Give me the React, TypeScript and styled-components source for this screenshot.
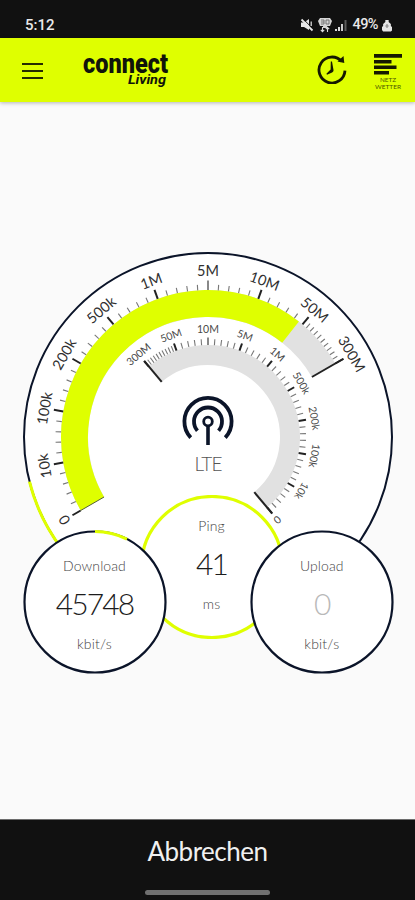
import React from "react";
import styled, { createGlobalStyle } from "styled-components";

const LIME = "#dfff00";
const NAVY = "#0b1429";
const BAND = "#e1e1e1";

const GlobalStyle = createGlobalStyle`
  body { margin: 0; background: #fafafa; }
  * { box-sizing: border-box; }
`;

const Screen = styled.div`
  display: flex;
  flex-direction: column;
  width: 100%;
  height: 900px;
  overflow: hidden;
  background: #fafafa;
  font-family: Lato, "Open Sans", sans-serif;
`;

const StatusBar = styled.div`
  display: flex;
  flex: 0 0 38px;
  align-items: center;
  justify-content: space-between;
  padding: 12px 23px 0 25px;
  background: #111;
  color: #e9e9e9;
  font: 500 15px/20px Roboto, sans-serif;
`;

const StatusIcons = styled.div`
  display: flex;
  align-items: center;
  gap: 3.5px;
`;

const Battery = styled.span`
  width: 27px;
  margin: 0 -1px 0 2px;
  font-size: 14.5px;
  letter-spacing: -0.6px;
`;

const AppBar = styled.header`
  display: flex;
  flex: 0 0 64px;
  align-items: flex-start;
  background: ${LIME};
  box-shadow: 0 1px 4px rgba(0, 0, 0, 0.28);
`;

const MenuButton = styled.button`
  display: flex;
  flex-direction: column;
  gap: 5px;
  width: 21px;
  margin: 25px 0 0 22px;
  padding: 0;
  border: 0;
  background: none;
`;

const MenuLine = styled.span`
  height: 2px;
  background: #252b00;
`;

const Logo = styled.svg`
  display: block;
  margin: 4px 0 0 38px;
  overflow: visible;
`;

const Actions = styled.div`
  display: flex;
  gap: 26px;
  margin: 14px 13px 0 auto;
`;

const Main = styled.main`
  flex: 1;
  padding-top: 148px;
`;

const Meter = styled.div`
  position: relative;
  width: 415px;
  height: 430px;
`;

const Dial = styled.svg`
  display: block;
`;

const Stat = styled.div<{ $x: number; $y: number }>`
  position: absolute;
  left: ${(p) => p.$x - 72}px;
  top: ${(p) => p.$y - 72}px;
  width: 144px;
  height: 144px;
`;

const Ring = styled.svg`
  display: block;
`;

const StatText = styled.div<{ $lift: number }>`
  position: absolute;
  inset: ${(p) => -p.$lift}px 0 0;
  display: flex;
  flex-direction: column;
  align-items: center;
`;

const StatName = styled.div`
  margin-top: 26px;
  color: #444;
  font-size: 14px;
  line-height: 20px;
  font-weight: 300;
  letter-spacing: 0.1px;
`;

const StatValue = styled.div<{ $faded?: boolean }>`
  margin-top: 9px;
  color: ${(p) => (p.$faded ? "#b9b9b9" : "#1c1c1c")};
  font-size: 30px;
  line-height: 36px;
  font-weight: 300;
  letter-spacing: -1.9px;
`;

const StatUnit = styled.div`
  margin-top: 13px;
  color: #444;
  font-size: 14px;
  line-height: 20px;
  font-weight: 300;
  letter-spacing: 0.2px;
`;

const Footer = styled.footer`
  display: flex;
  flex: 0 0 81px;
  flex-direction: column;
  align-items: center;
  border-top: 1px solid #6c6c6c;
  background: #111;
`;

const CancelButton = styled.button`
  margin-top: 13px;
  padding: 0;
  border: 0;
  background: none;
  color: #f0f0f0;
  font: 400 26px/36px Lato, sans-serif;
  letter-spacing: -0.5px;
`;

const HomeHandle = styled.span`
  width: 125px;
  height: 5px;
  margin-top: 21px;
  border-radius: 3px;
  background: #707070;
`;

const CX = 208;
const CY = 187;

const point = (r: number, deg: number, cx = CX, cy = CY) => {
  const a = (deg * Math.PI) / 180;
  return [cx + r * Math.cos(a), cy + r * Math.sin(a)];
};

const arc = (r: number, from: number, to: number, cx = CX, cy = CY) => {
  const [x1, y1] = point(r, from, cx, cy);
  const [x2, y2] = point(r, to, cx, cy);
  return `M${x1} ${y1}A${r} ${r} 0 ${to - from > 180 ? 1 : 0} 1 ${x2} ${y2}`;
};

type TickProps = { angle: number; from: number; to: number; width: number; color: string };

const Tick = ({ angle, from, to, width, color }: TickProps) => {
  const [x1, y1] = point(from, angle);
  const [x2, y2] = point(to, angle);
  return <line x1={x1} y1={y1} x2={x2} y2={y2} stroke={color} strokeWidth={width} />;
};

const LABELS = ["0", "10k", "100k", "200k", "500k", "1M", "5M", "10M", "50M", "300M"];

type ScaleProps = {
  start: number;
  direction: 1 | -1;
  radius: number;
  major: number;
  minor: number;
  labelRadius: number;
  fontSize: number;
  labelColor: string;
  spacing: number;
};

const Scale = (p: ScaleProps) => (
  <g>
    {LABELS.map((label, i) => {
      const angle = p.start + p.direction * 20 * i;
      const step = i === 8 ? 2 : 4;
      const count = i === 9 ? 0 : 20 / step - 1;
      const [x, y] = point(p.labelRadius, angle);
      return (
        <g key={label}>
          <Tick angle={angle} from={p.radius} to={p.radius + p.major} width={2} color={Math.abs(angle) % 90 === 0 ? "#888" : "#222"} />
          {Array.from({ length: count }, (_, n) => (
            <Tick key={n} angle={angle + p.direction * step * (n + 1)} from={p.radius} to={p.radius + p.minor} width={1.1} color="#777" />
          ))}
          <text
            transform={`translate(${x} ${y}) rotate(${angle + 90})`}
            y={p.fontSize * 0.36}
            textAnchor="middle"
            fontSize={p.fontSize}
            fontWeight={400}
            letterSpacing={p.spacing}
            fill={p.labelColor}
          >
            {label}
          </text>
        </g>
      );
    })}
  </g>
);

const SpeedDial = () => (
  <Dial width="415" height="430" viewBox="0 0 415 430" fontFamily="Lato, sans-serif">
    <circle cx={CX} cy={CY} r="184" fill="#fff" stroke={NAVY} strokeWidth="2" />
    <path d={arc(184, 120, 166)} fill="none" stroke={LIME} strokeWidth="3" />

    <path d={arc(133.5, 150, 330)} fill="none" stroke={BAND} strokeWidth="27" />
    <path d={arc(133.5, 150, 308.2)} fill="none" stroke={LIME} strokeWidth="27" />
    <Scale start={150} direction={1} radius={147} major={9.5} minor={5.5} labelRadius={166} fontSize={14.5} labelColor="#303030" spacing={0.1} />
    <Tick angle={150} from={120} to={147} width={1} color="#55603a" />
    <Tick angle={330} from={120} to={156} width={2} color="#222" />

    <path d={arc(82, -130, 50)} fill="none" stroke={BAND} strokeWidth="20" />
    <Scale start={50} direction={-1} radius={92} major={7.5} minor={6} labelRadius={108} fontSize={10.5} labelColor="#4a4a4a" spacing={0} />
    <Tick angle={50} from={72} to={100} width={2} color="#222" />
    <Tick angle={230} from={72} to={99} width={2} color="#222" />

    <g fill="none" stroke={NAVY}>
      <circle cx="208" cy="171.5" r="4.3" strokeWidth="2.8" />
      <path d="M208 176V195" strokeWidth="3.6" />
      <path d={arc(14, 139, 401, 208, 171.5)} strokeWidth="3.8" />
      <path d={arc(23.6, 137, 403, 208, 171.5)} strokeWidth="3.8" />
    </g>
    <text x="208" y="221" textAnchor="middle" fontSize="19" fontWeight="300" letterSpacing="-0.9" fill="#555">LTE</text>
  </Dial>
);

type StatCircleProps = {
  x: number;
  y: number;
  name: string;
  value: string;
  unit: string;
  color: string;
  width: number;
  progress?: number;
  faded?: boolean;
  lift?: number;
};

const StatCircle = (p: StatCircleProps) => (
  <Stat $x={p.x} $y={p.y}>
    <Ring width="144" height="144" viewBox="0 0 144 144">
      <circle cx="72" cy="72" r="70.5" fill="#fff" stroke={p.color} strokeWidth={p.width} />
      {p.progress && <path d={arc(70.5, -90, -90 + p.progress, 72, 72)} fill="none" stroke={LIME} strokeWidth="3" />}
    </Ring>
    <StatText $lift={p.lift ?? 0}>
      <StatName>{p.name}</StatName>
      <StatValue $faded={p.faded}>{p.value}</StatValue>
      <StatUnit>{p.unit}</StatUnit>
    </StatText>
  </Stat>
);

const MuteIcon = () => (
  <svg width="14" height="14" viewBox="0 0 14 14">
    <path d="M1 4.5h3L9 1v11L4 9H1z" fill="#e8e8e8" />
    <path d="M2.6 .4 13 10.8" stroke="#111" strokeWidth="1" />
    <path d="M1.5 1.5 12.5 12.5" stroke="#e8e8e8" strokeWidth="1.8" />
    <path d="M11.2 3.5v4.5" stroke="#e8e8e8" strokeWidth="1.2" />
  </svg>
);

const NetworkIcon = () => (
  <svg width="14" height="16" viewBox="0 0 14 16">
    <path d="M2 1h10l2 3-2 5H9v2H5V9H2L0 4z" fill="#d5d5d5" />
    <path d="M3 3h3v4H3M8 3h3v4H8zM3 5h3" fill="none" stroke="#777" strokeWidth="1" />
    <path d="M4.5 10v4.5M2.8 12.8l1.7 1.8 1.7-1.8M9.5 15v-4.5M7.8 12.2l1.7-1.8 1.7 1.8" fill="none" stroke="#ddd" strokeWidth="1.1" />
  </svg>
);

const SignalIcon = () => (
  <svg width="12" height="13" viewBox="0 0 12 13">
    <path d="M1 10v2M4 8v4" stroke="#ddd" strokeWidth="2" />
    <path d="M7 5v7" stroke="#ccc" strokeWidth="2" />
    <path d="M10.5 1v11" stroke="#5a5a5a" strokeWidth="2" />
  </svg>
);

const ChargeIcon = () => (
  <svg width="10" height="13" viewBox="0 0 9 13" preserveAspectRatio="none">
    <path d="M3 1h3v2l2 2v2l1 1v3.5L8 12.5H1L0 11V8l1-1V5l2-2z" fill="#e5e5e5" />
    <path d="M4.5 5v4M3 7h3" stroke="#888" />
  </svg>
);

const HistoryIcon = () => (
  <svg width="32" height="32" viewBox="0 0 32 32">
    <path d={arc(13, 3, 318, 16, 18)} fill="none" stroke="#151900" strokeWidth="2.8" />
    <path d="m21.5 9.5 6-5.5 .8 7z" fill="#151900" />
    <path d="m14.8 9.5 1.2-.1 1.5 8.6c.2 1.3-.5 2-1.4 2.4L11 22.7l-.6-.9 4.2-4.2z" fill="#151900" />
  </svg>
);

const WeatherIcon = () => (
  <svg width="28" height="40" viewBox="0 0 28 40" fontFamily="Lato, sans-serif" fill="#4e5900">
    <path d="M0 2h28v3.7H0zM0 8h17.5v3.5H0zM0 13.5h22.5v3.5H0zM0 19h15v3.4H0z" fill="#151900" />
    <text x="14" y="30" textAnchor="middle" fontSize="6.5" textLength="16" lengthAdjust="spacingAndGlyphs">NETZ</text>
    <text x="14" y="37" textAnchor="middle" fontSize="6.5" textLength="26" lengthAdjust="spacingAndGlyphs">WETTER</text>
  </svg>
);

export default function App() {
  return (
    <Screen>
      <GlobalStyle />
      <StatusBar>
        <span>5:12</span>
        <StatusIcons>
          <MuteIcon />
          <NetworkIcon />
          <SignalIcon />
          <Battery>49%</Battery>
          <ChargeIcon />
        </StatusIcons>
      </StatusBar>
      <AppBar>
        <MenuButton aria-label="Menu">
          <MenuLine />
          <MenuLine />
          <MenuLine />
        </MenuButton>
        <Logo width="88" height="50" viewBox="0 0 88 50" fontFamily="Roboto, sans-serif" fill="#10140a">
          <text x="2" y="31" fontSize="28" fontWeight="900" textLength="85" lengthAdjust="spacingAndGlyphs">connect</text>
          <text x="47" y="41.6" fontSize="12" fontWeight="700" fontStyle="italic" textLength="38" lengthAdjust="spacingAndGlyphs">Living</text>
        </Logo>
        <Actions>
          <HistoryIcon />
          <WeatherIcon />
        </Actions>
      </AppBar>
      <Main>
        <Meter>
          <SpeedDial />
          <StatCircle x={211.5} y={316.5} name="Ping" value="41" unit="ms" color={LIME} width={3.2} lift={4.5} />
          <StatCircle x={94.5} y={352.3} name="Download" value="45748" unit="kbit/s" color={NAVY} width={2.2} progress={27} />
          <StatCircle x={321.8} y={352.3} name="Upload" value="0" unit="kbit/s" color={NAVY} width={2.2} faded />
        </Meter>
      </Main>
      <Footer>
        <CancelButton>Abbrechen</CancelButton>
        <HomeHandle />
      </Footer>
    </Screen>
  );
}
